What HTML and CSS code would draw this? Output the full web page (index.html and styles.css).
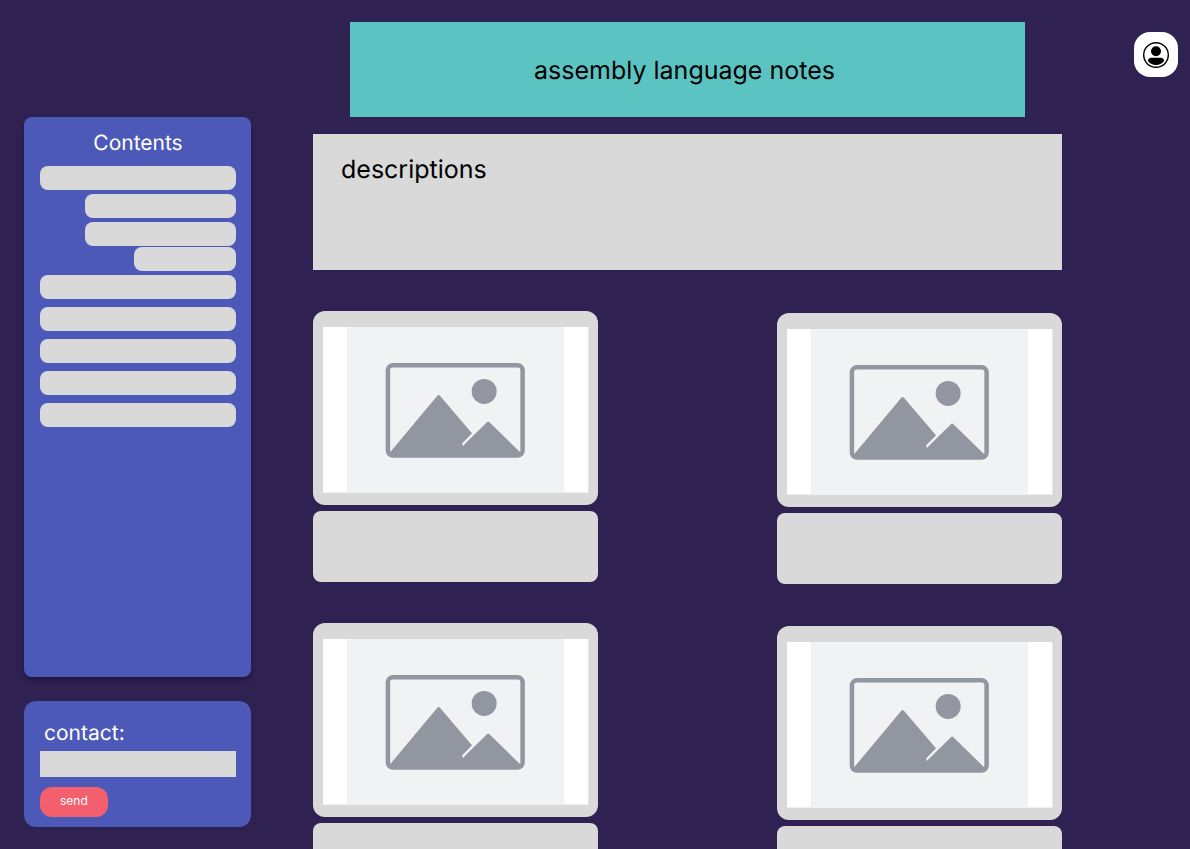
FILE: index.html
```html
<!DOCTYPE html>
<html lang="en">
<head>
<meta charset="utf-8">
<meta name="viewport" content="width=device-width, initial-scale=1">
<title>assembly language notes</title>
<link rel="stylesheet" href="styles.css">
</head>
<body>
<svg class="defs" aria-hidden="true">
  <symbol id="placeholder" viewBox="0 0 266 166">
    <rect width="266" height="166" fill="#fff"/>
    <rect x="23.500" width="218" height="166" fill="#f0f2f4"/>
    <rect x="65" y="38.400" width="134.900" height="90.300" rx="5" fill="none" stroke="#9296a0" stroke-width="4.500"/>
    <circle cx="161.400" cy="64.500" r="12.500" fill="#9296a0"/>
    <path d="M67 125.700 114.700 68.700Q115.800 67.500 116.900 68.700L149.400 106.600 139.700 116.200V118.900L140.500 118.700 164.400 95.200Q165.400 94.300 166.400 95.200L197.500 125.500 199.500 128.500H65.500Z" fill="#9296a0"/>
    <path d="M149.800 107.100 140.200 117.200" stroke="#f0f2f4" stroke-width="1.600"/>
  </symbol>
</svg>
<div class="page">
  <aside class="sidebar">
    <nav class="contents" aria-labelledby="contents-title">
      <h2 class="contents-title" id="contents-title">Contents</h2>
      <ul class="contents-list">
        <li class="entry"></li>
        <li class="entry level-2"></li>
        <li class="entry level-2"></li>
        <li class="entry level-3"></li>
        <li class="entry"></li>
        <li class="entry spaced"></li>
        <li class="entry spaced"></li>
        <li class="entry spaced"></li>
        <li class="entry spaced"></li>
      </ul>
    </nav>
    <form class="contact">
      <label class="contact-label" for="message">contact:</label>
      <input class="contact-input" id="message" type="text">
      <button class="send" type="button">send</button>
    </form>
  </aside>
  <main class="main">
    <header class="banner"><h1 class="title">assembly language notes</h1></header>
    <section class="description"><h2 class="title">descriptions</h2></section>
    <div class="gallery">
      <div class="column">
        <article class="card">
          <div class="frame"><svg class="picture" viewBox="0 0 266 166" role="img" aria-label="Image placeholder"><use href="#placeholder"/></svg></div>
          <div class="caption"></div>
        </article>
        <article class="card">
          <div class="frame"><svg class="picture" viewBox="0 0 266 166" role="img" aria-label="Image placeholder"><use href="#placeholder"/></svg></div>
          <div class="caption"></div>
        </article>
      </div>
      <div class="column column-end">
        <article class="card">
          <div class="frame"><svg class="picture" viewBox="0 0 266 166" role="img" aria-label="Image placeholder"><use href="#placeholder"/></svg></div>
          <div class="caption"></div>
        </article>
        <article class="card">
          <div class="frame"><svg class="picture" viewBox="0 0 266 166" role="img" aria-label="Image placeholder"><use href="#placeholder"/></svg></div>
          <div class="caption"></div>
        </article>
      </div>
    </div>
  </main>
  <button class="account" type="button" aria-label="Account">
    <svg class="account-icon" viewBox="0 0 26 26" aria-hidden="true">
      <circle cx="13" cy="13" r="12.300" fill="none" stroke="#000" stroke-width="1.400"/>
      <circle cx="13" cy="9.300" r="5"/>
      <path d="M7.600 15.800H18.400Q20.800 16.200 21.200 18.700C19.600 21.300 16.600 23 13 23S6.400 21.300 4.800 18.700Q5.200 16.200 7.600 15.800Z"/>
    </svg>
  </button>
</div>
</body>
</html>
```
FILE: styles.css
```css
* {
  box-sizing: border-box;
}

body {
  margin: 0;
  background: #2f2152;
  color: #000;
  font-family: Inter, "Liberation Sans", sans-serif;
  text-rendering: geometricPrecision;
}

.defs {
  display: none;
}

.page {
  display: grid;
  grid-template-columns: 227px minmax(0, 1fr) 44px;
  align-items: start;
  padding: 22px 12px 0 24px;
}

/* Sidebar */

.sidebar {
  display: flex;
  flex-direction: column;
  gap: 24px;
  padding-top: 95px;
}

.contents {
  min-height: 560px;
  padding: 13px 15px 16px 16px;
  border-radius: 8px;
  background: #4d59b9;
  box-shadow: 0 4px 4px rgba(0, 0, 0, 0.25);
}

.contents-title {
  margin: 0 0 8px;
  color: #fff;
  font-size: 21px;
  font-weight: 400;
  line-height: 28px;
  text-align: center;
}

.contents-list {
  margin: 0;
  padding: 0;
  list-style: none;
}

.entry {
  height: 24px;
  margin-top: 4px;
  border-radius: 8px;
  background: #d9d9d9;
}

.entry:first-child {
  margin-top: 0;
}

.level-2 {
  margin-left: 45px;
}

.level-3 {
  margin-top: 1px;
  margin-left: 94px;
}

.spaced {
  margin-top: 8px;
}

.contact {
  display: flex;
  flex-direction: column;
  align-items: flex-start;
  padding: 19px 15px 10px 16px;
  border-radius: 12px;
  background: #4d59b9;
}

.contact-label {
  padding: 0 4px 3px;
  color: #fff;
  font-size: 21px;
  line-height: 28px;
}

.contact-input {
  width: 100%;
  height: 26px;
  margin: 0 0 10px;
  padding: 0 8px;
  border: 0;
  border-radius: 0;
  background: #d9d9d9;
  font: inherit;
  font-size: 12px;
}

.send {
  padding: 0 20px 2px;
  border: 0;
  border-radius: 12px;
  background: #f45f6d;
  color: #fff;
  font: inherit;
  font-size: 12px;
  line-height: 28px;
}

/* Main column */

.main {
  padding: 0 72px 0 62px;
}

.banner {
  display: flex;
  align-items: center;
  justify-content: center;
  min-height: 95px;
  margin: 0 37px 17px;
  padding: 2px 6px 0 0;
  background: #5cc3c3;
}

.title {
  margin: 0;
  font-size: 25px;
  font-weight: 400;
  line-height: 32px;
}

.description {
  min-height: 136px;
  margin-bottom: 41px;
  padding: 20px 28px;
  background: #d9d9d9;
}

.gallery {
  display: flex;
  justify-content: space-between;
}

.column {
  display: flex;
  flex-direction: column;
  gap: 41px;
  width: 38%;
}

.column-end {
  gap: 42px;
  padding-top: 2px;
}

.card {
  display: flex;
  flex-direction: column;
  gap: 6px;
}

.frame {
  padding: 16px 9px 12px 10px;
  border-radius: 12px;
  background: #d9d9d9;
}

.picture {
  display: block;
  width: 100%;
}

.caption {
  min-height: 71px;
  border-radius: 8px;
  background: #d9d9d9;
}

/* Account button */

.account {
  display: grid;
  place-items: center;
  height: 45px;
  margin: 10px 0 0;
  padding: 0;
  border: 0;
  border-radius: 16px;
  background: #fff;
}

.account-icon {
  width: 26px;
  height: 26px;
}
```
